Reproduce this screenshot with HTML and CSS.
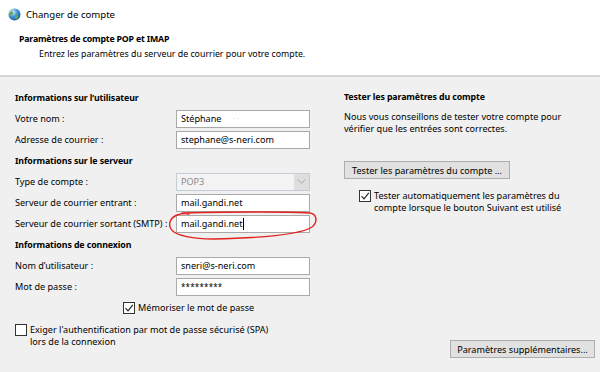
FILE: index.html
```html
<!DOCTYPE html>
<html lang="fr">
<head>
<meta charset="utf-8">
<title>Changer de compte</title>
<link rel="stylesheet" href="styles.css">
</head>
<body>
<div class="top">
  <div class="titlebar">
    <svg class="appicon" width="13" height="13" viewBox="0 0 13 13">
      <defs>
        <radialGradient id="g" cx="0.35" cy="0.3" r="0.8">
          <stop offset="0" stop-color="#dff1ff"/>
          <stop offset="0.5" stop-color="#3f8fd6"/>
          <stop offset="1" stop-color="#1b4f93"/>
        </radialGradient>
      </defs>
      <circle cx="6.5" cy="6.5" r="6" fill="url(#g)"/>
      <path d="M3 3.5 C4.5 3 5.5 4 5 5.5 C4.5 7 3 6.5 2.3 8 C1.6 6.5 1.8 4.5 3 3.5Z" fill="#5fae4a"/>
      <path d="M7.5 7 C9 6.5 10.5 7.5 10 9.5 C9.3 11 7.8 11.5 7 10.5 C7.5 9.5 6.8 8 7.5 7Z" fill="#5fae4a"/>
    </svg>
    <span class="title">Changer de compte</span>
  </div>
  <div class="header">
    <div class="h1">Paramètres de compte POP et IMAP</div>
    <div class="sub">Entrez les paramètres du serveur de courrier pour votre compte.</div>
  </div>
</div>
<div class="main">
  <div class="left">
    <div class="form">
      <div class="sec">Informations sur l’utilisateur</div>
      <div class="lbl">Votre nom :</div><div class="field">Stéphane<span class="blur">·&nbsp;·</span></div>
      <div class="lbl">Adresse de courrier :</div><div class="field">stephane@s-neri.com</div>
      <div class="sec">Informations sur le serveur</div>
      <div class="lbl">Type de compte :</div>
      <div class="select"><span class="seltext">POP3</span><span class="selbtn"><svg width="9" height="5" viewBox="0 0 9 5"><path d="M0.5 0.5 L4.5 4.2 L8.5 0.5" fill="none" stroke="#a8a8a8" stroke-width="1"/></svg></span></div>
      <div class="lbl">Serveur de courrier entrant :</div><div class="field">mail.gandi.net</div>
      <div class="lbl">Serveur de courrier sortant (SMTP) :</div><div class="field">mail.gandi.net<span class="caret"></span></div>
      <div class="sec">Informations de connexion</div>
      <div class="lbl">Nom d’utilisateur :</div><div class="field">sneri@s-neri.com</div>
      <div class="lbl">Mot de passe :</div><div class="field pwd">*********</div>
      <div class="chkrow remember"><span class="box checked"><svg width="10" height="10" viewBox="0 0 10 10"><path d="M1.5 5.2 L4 7.8 L8.8 1.8" fill="none" stroke="#222" stroke-width="1.1"/></svg></span><span>Mémoriser le mot de passe</span></div>
    </div>
    <div class="chkrow spa"><span class="box"></span><span class="multi">Exiger l'authentification par mot de passe sécurisé (SPA)<br>lors de la connexion</span></div>
  </div>
  <div class="right">
    <div class="sec rsec">Tester les paramètres du compte</div>
    <p class="advice">Nous vous conseillons de tester votre compte pour<br>vérifier que les entrées sont correctes.</p>
    <div class="btn testbtn">Tester les paramètres du compte ...</div>
    <div class="chkrow auto"><span class="box checked"><svg width="10" height="10" viewBox="0 0 10 10"><path d="M1.5 5.2 L4 7.8 L8.8 1.8" fill="none" stroke="#222" stroke-width="1.1"/></svg></span><span class="multi">Tester automatiquement les paramètres du<br>compte lorsque le bouton Suivant est utilisé</span></div>
    <div class="spacer"></div>
    <div class="btn morebtn">Paramètres supplémentaires...</div>
  </div>
</div>
<svg class="annot" width="600" height="372" viewBox="0 0 600 372">
  <path d="M182 213 C230 212 290 212 310 213 C317 214 318 222 312 227 C300 235 260 238 213 239 C195 239 175 236 171 229 C168 224 170 218 177 215 C180 214 184 213 189 214" fill="none" stroke="#e3211d" stroke-width="1.4" stroke-linecap="round"/>
</svg>
</body>
</html>
```
FILE: styles.css
```css
* { box-sizing: border-box; }
html, body { margin: 0; padding: 0; }
body {
  width: 600px;
  height: 372px;
  overflow: hidden;
  background: #f0f0f0;
  font-family: "Noto Sans", "Open Sans", sans-serif;
  font-size: 9.1px;
  color: #000;
  position: relative;
}
.top {
  background: #fff;
  border-bottom: 2px solid #d6d6d6;
  height: 77px;
}
.titlebar {
  height: 28px;
  display: flex;
  align-items: center;
  padding-left: 8px;
  gap: 5px;
}
.title { font-size: 9.6px; color: #000; }
.header { padding: 4px 0 0 19px; }
.h1 { font-weight: bold; font-size: 8.8px; letter-spacing: -0.2px; line-height: 15px; }
.sub { padding-left: 20px; line-height: 15px; font-size: 8.8px; }
.main {
  display: flex;
  padding-top: 10px;
  height: 295px;
}
.left { width: 329px; padding-left: 15px; }
.form {
  display: grid;
  grid-template-columns: 161px 134px;
  grid-auto-rows: 21px;
  align-items: center;
}
.sec { font-weight: bold; font-size: 8.8px; letter-spacing: -0.1px; grid-column: 1 / 3; }
.field {
  height: 18px;
  background: #fff;
  border: 1px solid #a9a9a9;
  padding: 0 4px;
  line-height: 16px;
  display: flex;
  align-items: center;
  white-space: nowrap;
}
.blur { color: #d8d8d8; margin-left: 12px; font-size: 7px; }
.pwd { font-size: 8px; letter-spacing: 0.2px; }
.caret { display: inline-block; width: 1px; height: 12px; background: #000; margin-left: 1px; }
.select {
  height: 18px;
  border: 1px solid #c4ccd6;
  background: #f3f3f3;
  display: flex;
  align-items: stretch;
}
.seltext { flex: 1; color: #8a8a8a; padding-left: 4px; line-height: 16px; }
.selbtn {
  width: 15px;
  background: #dedede;
  display: flex;
  align-items: center;
  justify-content: center;
}
.chkrow { display: flex; align-items: flex-start; gap: 3px; }
.remember { grid-column: 1 / 3; padding-left: 108px; align-items: center; }
.box {
  width: 12px;
  height: 12px;
  border: 1px solid #333;
  background: #fff;
  display: flex;
  align-items: center;
  justify-content: center;
  flex: none;
}
.spa { margin-top: 6px; }
.multi { line-height: 11.5px; }
.right {
  flex: 1;
  padding-left: 15px;
  display: flex;
  flex-direction: column;
  padding-right: 5px;
}
.rsec { line-height: 21px; }
.advice { margin: 3px 0 0 0; line-height: 11.5px; }
.btn {
  height: 18px;
  background: #e1e1e1;
  border: 1px solid #adadad;
  display: flex;
  align-items: center;
  justify-content: center;
  white-space: nowrap;
}
.testbtn { width: 166px; margin-top: 27px; }
.auto { margin-top: 11px; padding-left: 15px; }
.spacer { flex: 1; }
.morebtn { width: 145px; align-self: flex-end; margin-bottom: 14px; }
.annot { position: absolute; left: 0; top: 0; pointer-events: none; }
```
